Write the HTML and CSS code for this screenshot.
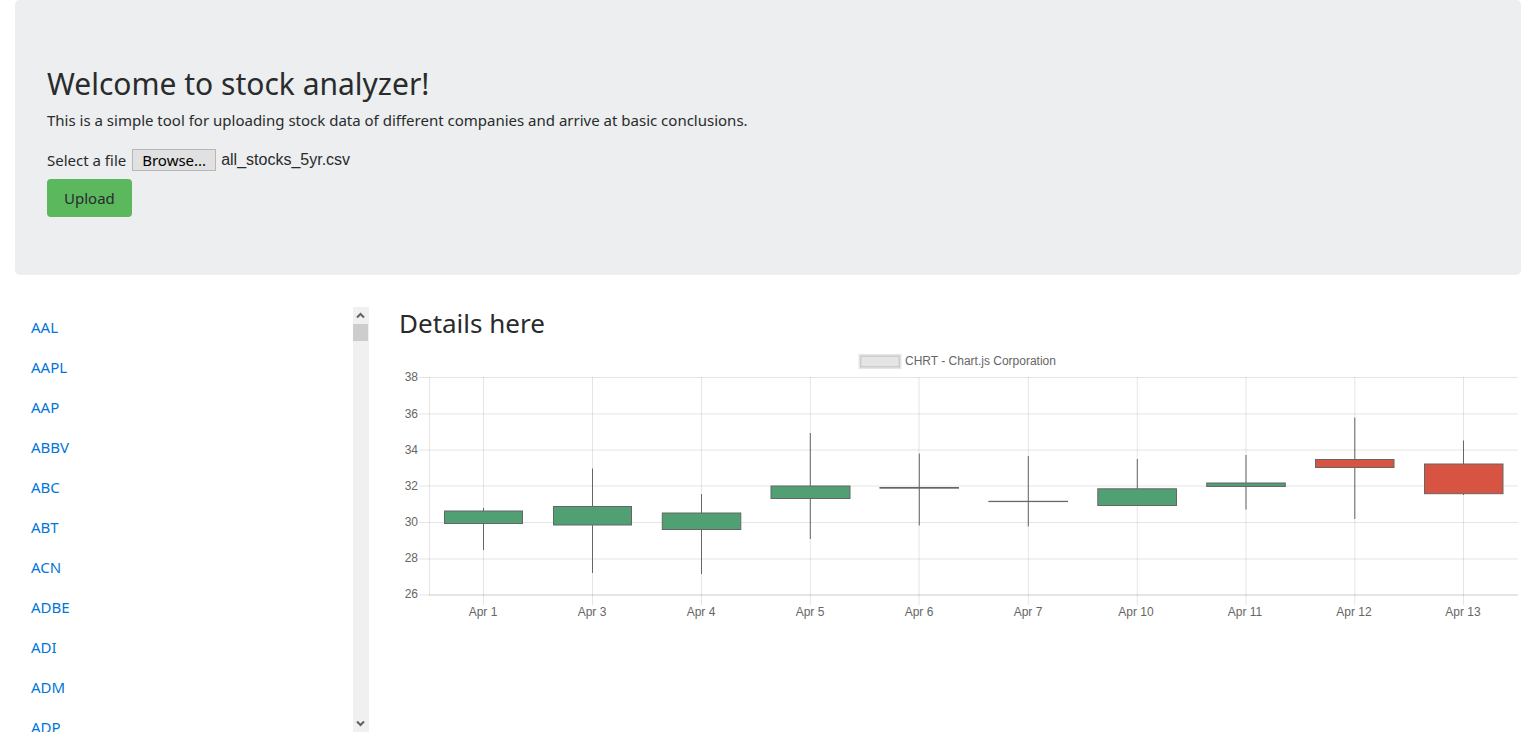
FILE: index.html
```html
<!DOCTYPE html>
<html lang="en">
<head>
<meta charset="utf-8">
<title>Stock analyzer</title>
<link rel="stylesheet" href="styles.css">
</head>
<body>
<header class="jumbotron">
  <h1 class="welcome">Welcome to stock analyzer!</h1>
  <p class="lead">This is a simple tool for uploading stock data of different companies and arrive at basic conclusions.</p>
  <form class="upload-form">
    <div class="file-row">
      <label for="stock-file">Select a file</label>
      <span class="file-picker">
        <button class="browse" type="button" tabindex="-1">Browse...</button>
        <span class="file-name">all_stocks_5yr.csv</span>
        <input class="file-input" id="stock-file" type="file">
      </span>
    </div>
    <button class="upload" type="submit">Upload</button>
  </form>
</header>
<main class="row">
  <div class="sidebar">
    <nav class="symbols" aria-label="Stocks">
      <a href="#AAL">AAL</a>
      <a href="#AAPL">AAPL</a>
      <a href="#AAP">AAP</a>
      <a href="#ABBV">ABBV</a>
      <a href="#ABC">ABC</a>
      <a href="#ABT">ABT</a>
      <a href="#ACN">ACN</a>
      <a href="#ADBE">ADBE</a>
      <a href="#ADI">ADI</a>
      <a href="#ADM">ADM</a>
      <a href="#ADP">ADP</a>
    </nav>
    <div class="scrollbar">
      <button class="scroll-arrow" type="button" aria-label="Scroll up"><svg width="9" height="7" viewBox="0 0 9 7"><path d="M1 5.5 4.500 2 8 5.500"/></svg></button>
      <div class="scroll-thumb"></div>
      <button class="scroll-arrow scroll-down" type="button" aria-label="Scroll down"><svg width="9" height="7" viewBox="0 0 9 7"><path d="M1 1.500 4.500 5 8 1.500"/></svg></button>
    </div>
  </div>
  <section class="details">
    <h2 class="details-title">Details here</h2>
    <svg class="chart" viewBox="0 0 1122 280" role="img" aria-label="CHRT - Chart.js Corporation">
      <rect class="legend-box" x="461" y="8.500" width="40" height="12"/>
      <text class="legend-text" x="506" y="18">CHRT - Chart.js Corporation</text>
      <path class="grid" d="M20 30.500H1119M20 67H1119M20 103H1119M20 139H1119M20 175.500H1119M20 212H1119M20 248H1119"/>
      <path class="grid" d="M30.500 30V248M84.500 30V258M193.500 30V258M302.500 30V258M411.300 30V258M520 30V258M629.300 30V258M738.300 30V258M847 30V258M955.800 30V258M1064.500 30V258"/>
      <path class="grid" d="M30 248H1119"/>
      <g class="y-labels">
        <text x="19" y="34">38</text><text x="19" y="71">36</text><text x="19" y="107">34</text><text x="19" y="143">32</text><text x="19" y="179">30</text><text x="19" y="215">28</text><text x="19" y="251">26</text>
      </g>
      <g class="x-labels">
        <text x="84" y="269">Apr 1</text><text x="193" y="269">Apr 3</text><text x="302" y="269">Apr 4</text><text x="411" y="269">Apr 5</text><text x="520" y="269">Apr 6</text><text x="629" y="269">Apr 7</text><text x="737" y="269">Apr 10</text><text x="846" y="269">Apr 11</text><text x="955" y="269">Apr 12</text><text x="1064" y="269">Apr 13</text>
      </g>
      <path class="wick" d="M84.500 161V203M193.500 121.500V226M302.500 147V227M411.300 86V192M520.300 106.500V178.500M629.300 109V179.500M738.300 112V158M847 108V162.500M955.800 70.500V172M1064.500 93.500V148"/>
      <g class="up">
        <rect x="45.500" y="164" width="78" height="12.500"/>
        <rect x="154.500" y="159.500" width="78" height="18.500"/>
        <rect x="263.300" y="166" width="78.500" height="16.500"/>
        <rect x="372" y="139" width="79" height="12.500"/>
        <path d="M480.500 140.500H560M480.500 141.200H560"/>
        <path d="M589.500 154.300H669M589.500 154.600H669"/>
        <rect x="698.800" y="141.800" width="78.700" height="16.700"/>
        <rect x="807.700" y="136" width="78.600" height="3.500"/>
      </g>
      <g class="down">
        <rect x="916.500" y="112.500" width="78.500" height="8"/>
        <rect x="1025.500" y="117" width="78.500" height="29.700"/>
      </g>
    </svg>
  </section>
</main>
</body>
</html>
```
FILE: styles.css
```css
* { box-sizing: border-box; }
body {
  margin: 0;
  padding: 0 15px;
  background: #fff;
  color: #292b2c;
  font: 15px/24px "Noto Sans", "Open Sans", sans-serif;
}
h1, h2, p { margin: 0; font-weight: 400; }
button { font: inherit; color: inherit; }
.jumbotron {
  margin-bottom: 32px;
  padding: 64px 32px 58px;
  background: #eceeef;
  border-radius: 5px;
}
.welcome { margin-bottom: 4px; font-size: 30px; line-height: 40px; }
.lead { margin-bottom: 16px; }
.file-row { display: flex; align-items: center; gap: 6px; margin-bottom: 7px; }
.file-picker { position: relative; display: flex; align-items: center; gap: 5px; }
.browse {
  height: 22px;
  padding: 0 9px;
  border: 1px solid #b5b7b8;
  background: #e1e1e1;
  color: #000;
  line-height: 18px;
}
.file-name { font-family: "Liberation Sans", Arial, sans-serif; font-size: 16px; }
.file-input { position: absolute; inset: 0; width: 100%; opacity: 0; cursor: pointer; }
.upload {
  display: block;
  padding: 7px 17px;
  border: 0;
  border-radius: 4px;
  background: #5cb85c;
}
.row { display: grid; grid-template-columns: minmax(0, 354fr) minmax(0, 1122fr); gap: 30px; }
.sidebar { display: flex; height: calc(100vh - 325px); }
.symbols { flex: 1; overflow: hidden; }
.symbols a { display: block; padding: 8px 16px; color: #0275d8; text-decoration: none; }
.scrollbar { display: flex; flex-direction: column; width: 16px; background: #f0f0f0; }
.scroll-arrow {
  display: grid;
  place-items: center;
  width: 15px;
  height: 17px;
  padding: 0;
  border: 0;
  background: none;
}
.scroll-arrow path { fill: none; stroke: #606060; stroke-width: 2; }
.scroll-down { margin-top: auto; }
.scroll-thumb { width: 15px; height: 17px; background: #cdcdcd; }
.details-title { margin-bottom: 8px; font-size: 26px; line-height: 32px; }
.chart {
  display: block;
  width: 100%;
  font: 12px "Liberation Sans", Arial, sans-serif;
}
.chart text { fill: #666; }
.legend-box { fill: rgba(0, 0, 0, 0.1); stroke: rgba(0, 0, 0, 0.1); stroke-width: 3; }
.grid { fill: none; stroke: rgba(0, 0, 0, 0.1); }
.y-labels { text-anchor: end; }
.x-labels { text-anchor: middle; }
.wick { fill: none; stroke: #666; }
.up { fill: #50a073; stroke: #666; }
.down { fill: #d75442; stroke: #666; }
```
